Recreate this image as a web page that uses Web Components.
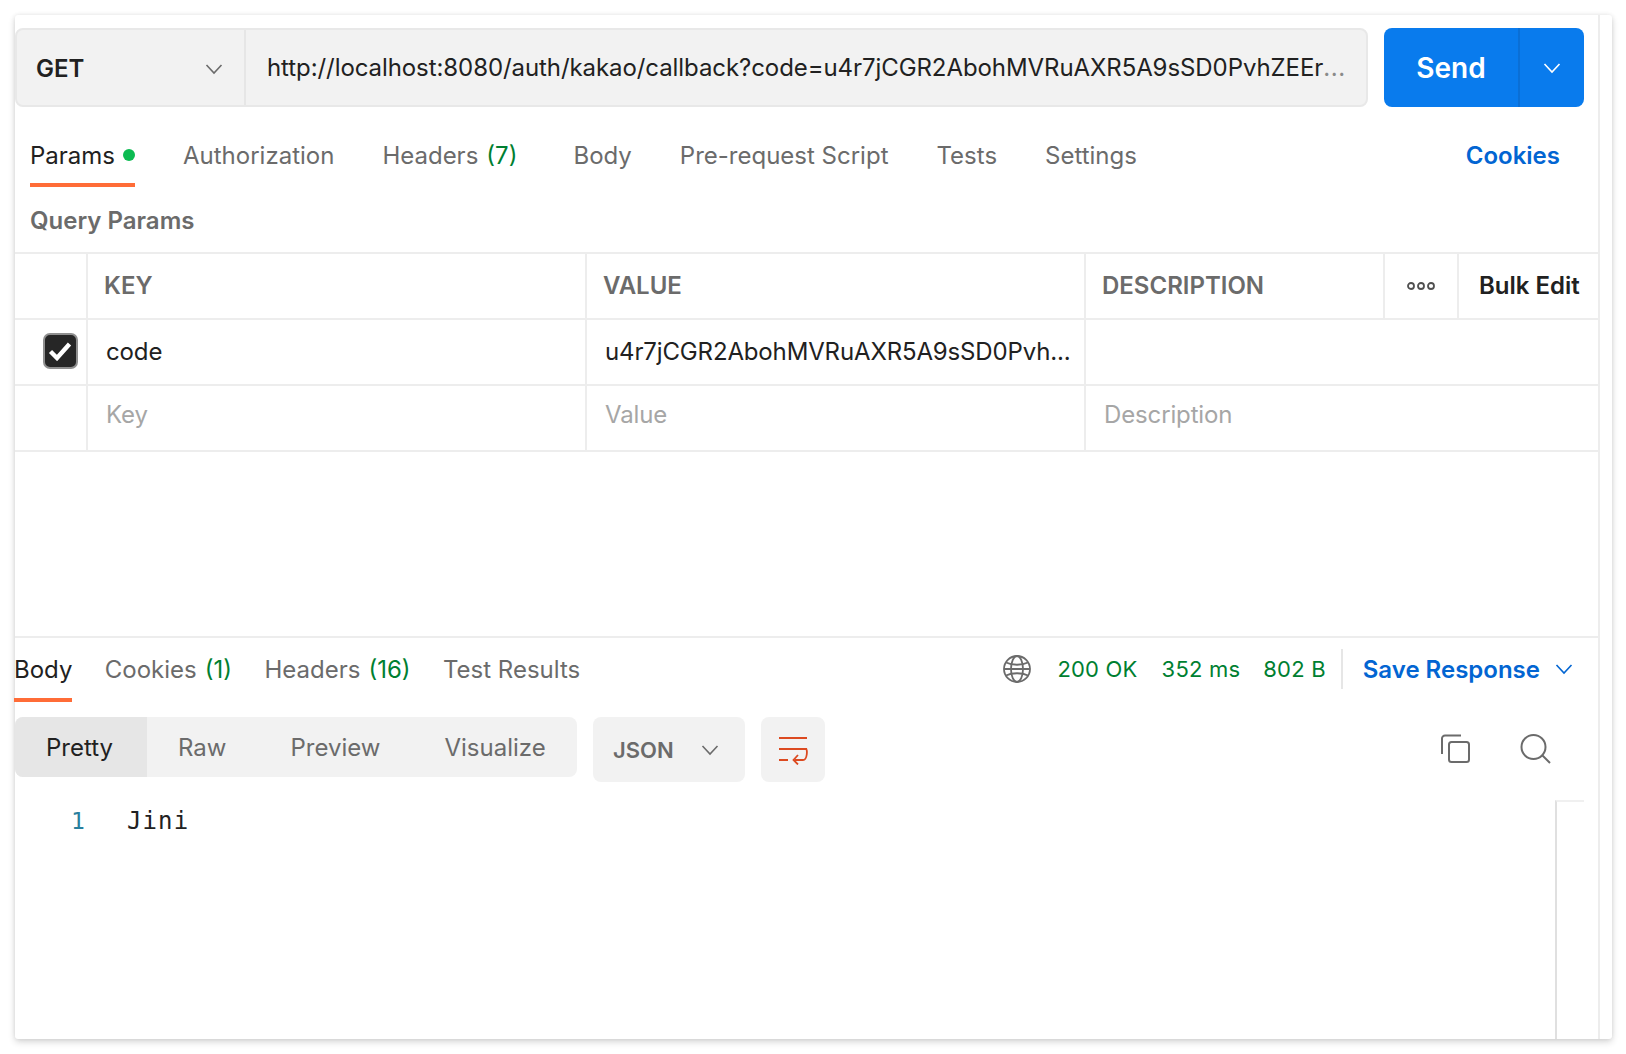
<!DOCTYPE html>
<html>
<head>
<meta charset="utf-8">
<title>Request</title>
<style>
  html, body { margin: 0; background: #fff; }
  body { padding: 15px; height: 1024px; overflow: hidden; font-family: Inter, "Liberation Sans", sans-serif; color: #212121; }
</style>
</head>
<body>
<api-window>
  <request-bar></request-bar>
  <tab-strip class="req">
    <tab-item active>Params<i></i></tab-item>
    <tab-item>Authorization</tab-item>
    <tab-item count="(7)" class="wide">Headers</tab-item>
    <tab-item>Body</tab-item>
    <tab-item>Pre-request Script</tab-item>
    <tab-item>Tests</tab-item>
    <tab-item>Settings</tab-item>
    <link-label slot="end">Cookies</link-label>
  </tab-strip>
  <params-table></params-table>
  <response-bar></response-bar>
  <response-tools></response-tools>
  <code-view></code-view>
</api-window>

<script>
const chevron = (size, color) => `<svg width="${size}" height="${size}" viewBox="0 0 18 18" fill="none" stroke="${color}" stroke-width="1.6"><path d="M1.5 5l7.5 8 7.5-8"/></svg>`;

class ApiWindow extends HTMLElement {
  constructor() {
    super();
    this.attachShadow({ mode: 'open' });
    this.shadowRoot.innerHTML = `
      <style>
        :host {
          display: block; box-sizing: border-box; width: 1597px; height: 1024px;
          background: #fff; border-radius: 3px;
          box-shadow: 0 3px 7px rgba(0,0,0,.16), 0 0 4px rgba(0,0,0,.08);
        }
        .inner { box-sizing: border-box; width: 1585px; height: 100%; border-right: 2px solid #ededed; display: flex; flex-direction: column; }
      </style>
      <div class="inner"><slot></slot></div>`;
  }
}

class RequestBar extends HTMLElement {
  constructor() {
    super();
    this.attachShadow({ mode: 'open' });
    this.shadowRoot.innerHTML = `
      <style>
        :host { display: flex; gap: 16px; margin-top: 13px; height: 79px; font-size: 24px; }
        .bar { width: 1353px; box-sizing: border-box; display: flex; background: #f2f2f2; border: 2px solid #e8e8e8; border-radius: 8px; }
        .method { width: 229px; flex: none; box-sizing: border-box; display: flex; align-items: center; justify-content: space-between; padding: 2px 21px 0 19px; font-weight: 600; border-right: 2px solid #e6e6e6; color: #212121; }
        .url { flex: 1; display: flex; align-items: center; padding: 0 0 1px 21px; white-space: nowrap; letter-spacing: -.08px; min-width: 0; color: #212121; }
        .url em { font-style: normal; color: #8a8a8a; margin-left: 0; letter-spacing: .6px; }
        .send { width: 200px; display: flex; background: #097bed; color: #fff; border-radius: 8px; font-weight: 600; font-size: 28px; }
        .send span { width: 134px; display: flex; align-items: center; justify-content: center; border-right: 2px solid #0a6fd6; }
        .send div { flex: 1; display: flex; align-items: center; justify-content: center; }
      </style>
      <div class="bar">
        <div class="method">GET ${chevron(18, '#6b6b6b')}</div>
        <div class="url">http://localhost:8080/auth/kakao/callback?code=u4r7jCGR2AbohMVRuAXR5A9sSD0PvhZEEr<em>...</em></div>
      </div>
      <div class="send"><span>Send</span><div>${chevron(18, '#fff')}</div></div>`;
  }
}

class TabStrip extends HTMLElement {
  constructor() {
    super();
    this.attachShadow({ mode: 'open' });
    this.shadowRoot.innerHTML = `
      <style>
        :host { display: flex; padding: 17px 38px 0 15px; height: 63px; gap: 48px; --tab-top: 3px; }
        :host(.resp) { padding: 0; margin-left: -1px; gap: 32.400px; height: 64px; --tab-top: 2px; }
        .end { margin-left: auto; display: flex; }
      </style>
      <slot></slot>
      <div class="end"><slot name="end"></slot></div>`;
  }
}

class TabItem extends HTMLElement {
  constructor() {
    super();
    this.attachShadow({ mode: 'open' });
    const count = this.getAttribute('count');
    this.shadowRoot.innerHTML = `
      <style>
        :host { display: flex; align-items: center; box-sizing: border-box; height: 100%; font-size: 24px; color: #6b6b6b; border-bottom: 4px solid transparent; padding-top: var(--tab-top); white-space: nowrap; }
        :host([active]) { color: #212121; border-bottom-color: #ff6c37; }
        :host(.wide) { margin-right: 8px; }
        b { font-weight: 400; color: #007f31; margin-left: 8px; }
        ::slotted(i) { display: block; width: 12px; height: 12px; border-radius: 50%; background: #0cbb52; margin-left: 8px; }
      </style>
      <slot></slot>${count ? `<b>${count}</b>` : ''}`;
  }
}

class LinkLabel extends HTMLElement {
  constructor() {
    super();
    this.attachShadow({ mode: 'open' });
    this.shadowRoot.innerHTML = `
      <style>:host { display: flex; align-items: center; height: 59px; padding-top: 2px; font-size: 24px; font-weight: 600; color: #0265d2; white-space: nowrap; }</style>
      <slot></slot>`;
  }
}

class ParamsTable extends HTMLElement {
  constructor() {
    super();
    this.attachShadow({ mode: 'open' });
    this.shadowRoot.innerHTML = `
      <style>
        :host { display: block; font-size: 24px; letter-spacing: -.14px; }
        h4 { margin: 0; height: 65px; display: flex; align-items: center; padding: 1px 0 0 15px; font-size: 24px; font-weight: 600; color: #6b6b6b; letter-spacing: 0; box-sizing: border-box; }
        .row { display: grid; grid-template-columns: 71px 499px 499px 299px 74px 1fr; height: 64px; border-top: 2px solid #ededed; }
        .row.last { border-bottom: 2px solid #ededed; }
        .row > div { display: flex; align-items: center; min-width: 0; border-left: 2px solid #ededed; padding: 0 0 2px 18px; box-sizing: border-box; white-space: nowrap; }
        .row.last > div { padding-bottom: 7px; }
        .row > div:first-child { border-left: 0; padding-left: 0; justify-content: center; }
        .row > .span { grid-column: 4 / 7; }
        .head { font-weight: 600; color: #6b6b6b; letter-spacing: 0; }
        .head > div { padding-left: 16px !important; }
        .head > .dots { padding: 0 !important; justify-content: center; }
        .head > .bulk { color: #212121; padding-left: 20px !important; }
        .ph { color: #a6a6a6; }
        .box { width: 35px; height: 36px; box-sizing: border-box; background: #262626; border: 2px solid #8f8f8f; border-radius: 7px; display: flex; align-items: center; justify-content: center; margin-left: 19px; }
      </style>
      <h4>Query Params</h4>
      <div class="row head">
        <div></div><div>KEY</div><div>VALUE</div><div>DESCRIPTION</div>
        <div class="dots"><svg width="30" height="10" viewBox="0 0 30 10" fill="none" stroke="#505050" stroke-width="1.8"><circle cx="5" cy="5" r="3"/><circle cx="15" cy="5" r="3"/><circle cx="25" cy="5" r="3"/></svg></div>
        <div class="bulk">Bulk Edit</div>
      </div>
      <div class="row">
        <div><span class="box"><svg width="24" height="20" viewBox="0 0 24 20" fill="none" stroke="#fff" stroke-width="4.4"><path d="M2.500 10.500l6.500 6.500L21.500 3"/></svg></span></div>
        <div>code</div><div>u4r7jCGR2AbohMVRuAXR5A9sSD0Pvh...</div><div class="span"></div>
      </div>
      <div class="row last ph">
        <div></div><div>Key</div><div>Value</div><div class="span">Description</div>
      </div>`;
  }
}

class ResponseBar extends HTMLElement {
  constructor() {
    super();
    this.attachShadow({ mode: 'open' });
    this.shadowRoot.innerHTML = `
      <style>
        :host { display: flex; margin-top: 184px; border-top: 2px solid #ededed; height: 63px; font-size: 24px; }
        .stats { margin-left: auto; display: flex; align-items: center; color: #007f31; white-space: nowrap; height: 60px; padding: 2px 25px 0 0; box-sizing: border-box; }
        .stats span { margin-left: 24px; font-size: 22px; letter-spacing: .2px; }
        .stats span.ok { margin-left: 0; }
        .stats span.size { margin-left: 23px; }
        .stats .globe { margin: 0 26px 0 0; display: flex; }
        .sep { width: 2px; height: 40px; background: #e6e6e6; margin: 0 20px 0 15px; }
        .save { color: #0265d2; font-weight: 600; display: flex; align-items: center; gap: 15px; }
      </style>
      <tab-strip class="resp">
        <tab-item active>Body</tab-item>
        <tab-item count="(1)">Cookies</tab-item>
        <tab-item count="(16)">Headers</tab-item>
        <tab-item>Test Results</tab-item>
      </tab-strip>
      <div class="stats">
        <div class="globe"><svg width="28" height="28" viewBox="0 0 28 28" fill="none" stroke="#6b6b6b" stroke-width="1.8"><circle cx="14" cy="14" r="13"/><ellipse cx="14" cy="14" rx="6" ry="13"/><path d="M3 7.500c6 3 16 3 22 0M3 20.500c6-3 16-3 22 0M1 14h26"/></svg></div>
        <span class="ok">200&nbsp;OK</span><span>352 ms</span><span class="size">802 B</span>
        <div class="sep"></div>
        <div class="save">Save Response ${chevron(18, '#0265d2')}</div>
      </div>`;
  }
}

class ResponseTools extends HTMLElement {
  constructor() {
    super();
    this.attachShadow({ mode: 'open' });
    this.shadowRoot.innerHTML = `
      <style>
        :host { display: flex; align-items: flex-start; margin-top: 16px; height: 65px; font-size: 24px; color: #6b6b6b; }
        .modes { display: flex; width: 562px; height: 60px; background: #f2f2f2; border-radius: 8px; overflow: hidden; margin-right: 16px; }
        .modes span { display: flex; align-items: center; padding: 0 32px; }
        .modes .on { background: #e6e6e6; color: #212121; padding: 0 34px 0 31px; }
        .modes .on + span { padding-left: 31px; }
        .json { width: 152px; height: 65px; box-sizing: border-box; background: #f2f2f2; border-radius: 8px; display: flex; align-items: center; padding-left: 20px; gap: 27px; font-size: 22px; font-weight: 600; margin-right: 16px; }
        .wrap { width: 64px; height: 65px; background: #f2f2f2; border-radius: 8px; display: flex; align-items: center; justify-content: center; }
        .right { margin-left: auto; display: flex; gap: 50px; padding: 17px 47px 0 0; }
      </style>
      <div class="modes"><span class="on">Pretty</span><span>Raw</span><span>Preview</span><span>Visualize</span></div>
      <div class="json">JSON ${chevron(18, '#6b6b6b')}</div>
      <div class="wrap"><svg width="30" height="30" viewBox="0 0 30 30" fill="none" stroke="#dc4a20" stroke-width="2"><path d="M1 3h28M1 14h28M1 25h9"/><path d="M28 14c1.500 0 1.500 11-3 11h-8M20 20l-4.500 5 4.500 4.500" stroke-width="1.800"/></svg></div>
      <div class="right">
        <svg width="29" height="29" viewBox="0 0 29 29" fill="none" stroke="#6b6b6b" stroke-width="2"><rect x="8" y="8" width="20" height="20" rx="2.500"/><path d="M20 1.500H4A3 3 0 0 0 1 4.500V20"/></svg>
        <svg width="31" height="30" viewBox="0 0 31 30" fill="none" stroke="#6b6b6b" stroke-width="2"><circle cx="13.500" cy="13" r="12"/><path d="M22.500 21.500l7.500 7.500"/></svg>
      </div>`;
  }
}

class CodeView extends HTMLElement {
  constructor() {
    super();
    this.attachShadow({ mode: 'open' });
    this.shadowRoot.innerHTML = `
      <style>
        :host { display: flex; flex: 1; min-height: 0; font-family: "DejaVu Sans Mono", "Liberation Mono", monospace; font-size: 24px; }
        .text { flex: 1; display: flex; padding-top: 21px; line-height: 36px; }
        .num { width: 56px; padding-left: 56px; color: #2a7f9e; font-size: 23px; }
        .code { letter-spacing: 1.1px; color: #212121; }
        .gutter { width: 27px; border-left: 2px solid #e0e0e0; border-top: 2px solid #f0f0f0; margin-right: 14px; margin-top: 18px; }
      </style>
      <div class="text"><div class="num">1</div><div class="code">Jini</div></div>
      <div class="gutter"></div>`;
  }
}

customElements.define('api-window', ApiWindow);
customElements.define('request-bar', RequestBar);
customElements.define('tab-strip', TabStrip);
customElements.define('tab-item', TabItem);
customElements.define('link-label', LinkLabel);
customElements.define('params-table', ParamsTable);
customElements.define('response-bar', ResponseBar);
customElements.define('response-tools', ResponseTools);
customElements.define('code-view', CodeView);
</script>
</body>
</html>
